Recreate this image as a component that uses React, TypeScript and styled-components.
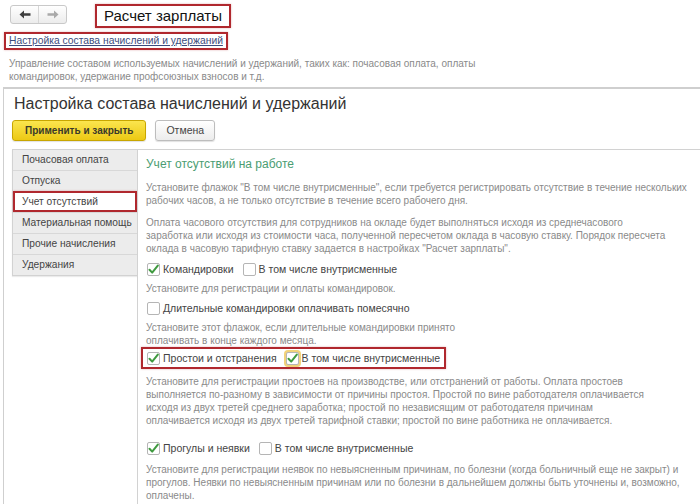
import React from "react";
import styled, { createGlobalStyle } from "styled-components";

const GlobalStyle = createGlobalStyle`
  html, body {
    margin: 0;
    padding: 0;
    background: #ffffff;
    font-family: "Liberation Sans", Arial, sans-serif;
    color: #333333;
  }
  body {
    width: 700px;
    height: 504px;
    overflow: hidden;
  }
`;

const Page = styled.div`
  width: 700px;
  height: 504px;
  overflow: hidden;
`;

const Header = styled.div`
  display: flex;
  align-items: flex-start;
  padding: 4px 0 0 10px;
  gap: 28px;
`;

const NavGroup = styled.div`
  display: flex;
  margin-top: 1px;
  border: 1px solid #c9c9c9;
  border-radius: 3px;
  background: linear-gradient(#ffffff, #ececec);
`;

const NavButton = styled.div<{ $last?: boolean }>`
  width: 27px;
  height: 17px;
  display: flex;
  align-items: center;
  justify-content: center;
  border-left: ${({ $last }) => ($last ? "1px solid #d6d6d6" : "none")};
`;

const RedBox = styled.div`
  border: 2px solid #b0282e;
  box-shadow: 0 0 2px rgba(176, 40, 46, 0.35);
`;

const TitleBox = styled(RedBox)`
  height: 20px;
  padding: 0 7px;
  font-size: 15px;
  line-height: 20px;
  color: #111111;
`;

const LinkBox = styled(RedBox)`
  display: inline-block;
  margin: 4px 0 0 4px;
  height: 14px;
  padding: 0 3px;
  font-size: 10.3px;
  line-height: 14px;
`;

const Link = styled.span`
  color: #3b4d7e;
  text-decoration: underline;
`;

const Description = styled.div`
  margin: 7px 0 0 9px;
  font-size: 10px;
  line-height: 13px;
  color: #8a8a8a;
  white-space: nowrap;
`;

const Panel = styled.div`
  margin: 4px 0 0 3px;
  border-top: 2px solid #cfcfcf;
  border-left: 1px solid #cfcfcf;
  height: 420px;
`;

const PanelTitle = styled.div`
  padding: 5px 0 0 10px;
  font-size: 16px;
  line-height: 19px;
  color: #333333;
`;

const ButtonRow = styled.div`
  display: flex;
  gap: 9px;
  margin: 7px 0 0 8px;
`;

const Button = styled.div<{ $primary?: boolean }>`
  height: 19px;
  padding: 0 ${({ $primary }) => ($primary ? "12px" : "10px")};
  border: 1px solid ${({ $primary }) => ($primary ? "#c8a600" : "#bdbdbd")};
  border-radius: 3px;
  background: ${({ $primary }) =>
    $primary
      ? "linear-gradient(#fbe54e, #ecc914)"
      : "linear-gradient(#ffffff, #ececec)"};
  font-size: ${({ $primary }) => ($primary ? "10px" : "10.5px")};
  font-weight: ${({ $primary }) => ($primary ? "bold" : "normal")};
  line-height: 19px;
  color: ${({ $primary }) => ($primary ? "#3a3a2a" : "#444444")};
  box-shadow: 0 1px 1px rgba(0, 0, 0, 0.12);
`;

const Body = styled.div`
  display: flex;
  margin-top: 8px;
  padding-left: 8px;
`;

const SideList = styled.div`
  flex: 0 0 124px;
  border: 1px solid #d2d2d2;
  border-right: none;
  align-self: flex-start;
  box-shadow: 0 1px 1px rgba(0, 0, 0, 0.08);
`;

const SideItem = styled.div<{ $active?: boolean }>`
  height: 20px;
  padding-left: 9px;
  font-size: 10.2px;
  line-height: 20px;
  color: #444444;
  white-space: nowrap;
  background: ${({ $active }) => ($active ? "#ffffff" : "#ececec")};
  border-top: 1px solid #d8d8d8;
  &:first-child {
    border-top: none;
  }
`;

const ActiveItem = styled(SideItem)`
  height: 17px;
  line-height: 17px;
  padding-left: 7px;
  border: 2px solid #b0282e;
  box-shadow: 0 0 2px rgba(176, 40, 46, 0.35);
`;

const Content = styled.div`
  flex: 1;
  min-width: 0;
  border-top: 1px solid #d2d2d2;
  border-left: 1px solid #d2d2d2;
  padding: 6px 0 0 8px;
  height: 360px;
`;

const Heading = styled.div`
  font-size: 12px;
  line-height: 17px;
  color: #4b9d72;
`;

const Hint = styled.div<{ $top?: number }>`
  margin-top: ${({ $top }) => ($top ?? 8)}px;
  font-size: 10px;
  line-height: 13px;
  color: #8a8a8a;
  white-space: nowrap;
`;

const CheckRow = styled.div<{ $top?: number }>`
  display: flex;
  align-items: center;
  height: 18px;
  margin-top: ${({ $top }) => ($top ?? 4)}px;
  gap: 3px;
`;

const MarkedRow = styled(CheckRow)`
  display: inline-flex;
  height: 18px;
  margin-left: -5px;
  padding: 0 4px 0 3px;
  border: 2px solid #b0282e;
  box-shadow: 0 0 2px rgba(176, 40, 46, 0.35);
`;

const Box = styled.div<{ $focus?: boolean }>`
  width: 11px;
  height: 11px;
  border: 1px solid #b5b5b5;
  border-radius: 2px;
  background: #ffffff;
  display: flex;
  align-items: center;
  justify-content: center;
  margin-left: 1px;
  box-shadow: ${({ $focus }) => ($focus ? "0 0 0 2px #f2d27a" : "none")};
`;

const Label = styled.span<{ $gap?: boolean }>`
  font-size: 10.5px;
  color: #444444;
  margin-right: ${({ $gap }) => ($gap ? "5px" : "0")};
  white-space: nowrap;
`;

const Arrow = ({ dir, color }: { dir: "left" | "right"; color: string }) => (
  <svg width="12" height="9" viewBox="0 0 12 9">
    <g transform={dir === "right" ? "scale(-1,1) translate(-12,0)" : undefined}>
      <path d="M0.5 4.5 L5 0.5 L5 3.3 L11.5 3.3 L11.5 5.7 L5 5.7 L5 8.5 Z" fill={color} />
    </g>
  </svg>
);

const Tick = () => (
  <svg width="11" height="11" viewBox="0 0 11 11">
    <path
      d="M1.5 5.8 L4.2 8.6 L9.8 1.6"
      fill="none"
      stroke="#3f9a3f"
      strokeWidth="2"
      strokeLinecap="round"
      strokeLinejoin="round"
    />
  </svg>
);

const Check = ({ on, focus }: { on?: boolean; focus?: boolean }) => (
  <Box $focus={focus}>{on && <Tick />}</Box>
);

const sections = [
  "Почасовая оплата",
  "Отпуска",
  "Учет отсутствий",
  "Материальная помощь",
  "Прочие начисления",
  "Удержания",
];

export default function App() {
  return (
    <Page>
      <GlobalStyle />
      <Header>
        <NavGroup>
          <NavButton>
            <Arrow dir="left" color="#3e3e3e" />
          </NavButton>
          <NavButton $last>
            <Arrow dir="right" color="#a9a9a9" />
          </NavButton>
        </NavGroup>
        <TitleBox>Расчет зарплаты</TitleBox>
      </Header>
      <LinkBox>
        <Link>Настройка состава начислений и удержаний</Link>
      </LinkBox>
      <Description>
        Управление составом используемых начислений и удержаний, таких как: почасовая оплата, оплаты
        <br />
        командировок, удержание профсоюзных взносов и т.д.
      </Description>
      <Panel>
        <PanelTitle>Настройка состава начислений и удержаний</PanelTitle>
        <ButtonRow>
          <Button $primary>Применить и закрыть</Button>
          <Button>Отмена</Button>
        </ButtonRow>
        <Body>
          <SideList>
            {sections.map((s) =>
              s === "Учет отсутствий" ? (
                <ActiveItem key={s} $active>
                  {s}
                </ActiveItem>
              ) : (
                <SideItem key={s}>{s}</SideItem>
              )
            )}
          </SideList>
          <Content>
            <Heading>Учет отсутствий на работе</Heading>
            <Hint $top={8}>
              Установите флажок "В том числе внутрисменные", если требуется регистрировать отсутствие в течение нескольких
              <br />
              рабочих часов, а не только отсутствие в течение всего рабочего дня.
            </Hint>
            <Hint $top={9}>
              Оплата часового отсутствия для сотрудников на окладе будет выполняться исходя из среднечасового
              <br />
              заработка или исходя из стоимости часа, полученной пересчетом оклада в часовую ставку. Порядок пересчета
              <br />
              оклада в часовую тарифную ставку задается в настройках "Расчет зарплаты".
            </Hint>
            <CheckRow $top={5}>
              <Check on />
              <Label $gap>Командировки</Label>
              <Check />
              <Label>В том числе внутрисменные</Label>
            </CheckRow>
            <Hint $top={4}>Установите для регистрации и оплаты командировок.</Hint>
            <CheckRow $top={4}>
              <Check />
              <Label>Длительные командировки оплачивать помесячно</Label>
            </CheckRow>
            <Hint $top={4}>
              Установите этот флажок, если длительные командировки принято
              <br />
              оплачивать в конце каждого месяца.
            </Hint>
            <MarkedRow $top={0}>
              <Check on />
              <Label $gap>Простои и отстранения</Label>
              <Check on focus />
              <Label>В том числе внутрисменные</Label>
            </MarkedRow>
            <Hint $top={6}>
              Установите для регистрации простоев на производстве, или отстранений от работы. Оплата простоев
              <br />
              выполняется по-разному в зависимости от причины простоя. Простой по вине работодателя оплачивается
              <br />
              исходя из двух третей среднего заработка; простой по независящим от работодателя причинам
              <br />
              оплачивается исходя из двух третей тарифной ставки; простой по вине работника не оплачивается.
            </Hint>
            <CheckRow $top={12}>
              <Check on />
              <Label $gap>Прогулы и неявки</Label>
              <Check />
              <Label>В том числе внутрисменные</Label>
            </CheckRow>
            <Hint $top={6}>
              Установите для регистрации неявок по невыясненным причинам, по болезни (когда больничный еще не закрыт) и
              <br />
              прогулов. Неявки по невыясненным причинам или по болезни в дальнейшем должны быть уточнены и, возможно,
              <br />
              оплачены.
            </Hint>
          </Content>
        </Body>
      </Panel>
    </Page>
  );
}
